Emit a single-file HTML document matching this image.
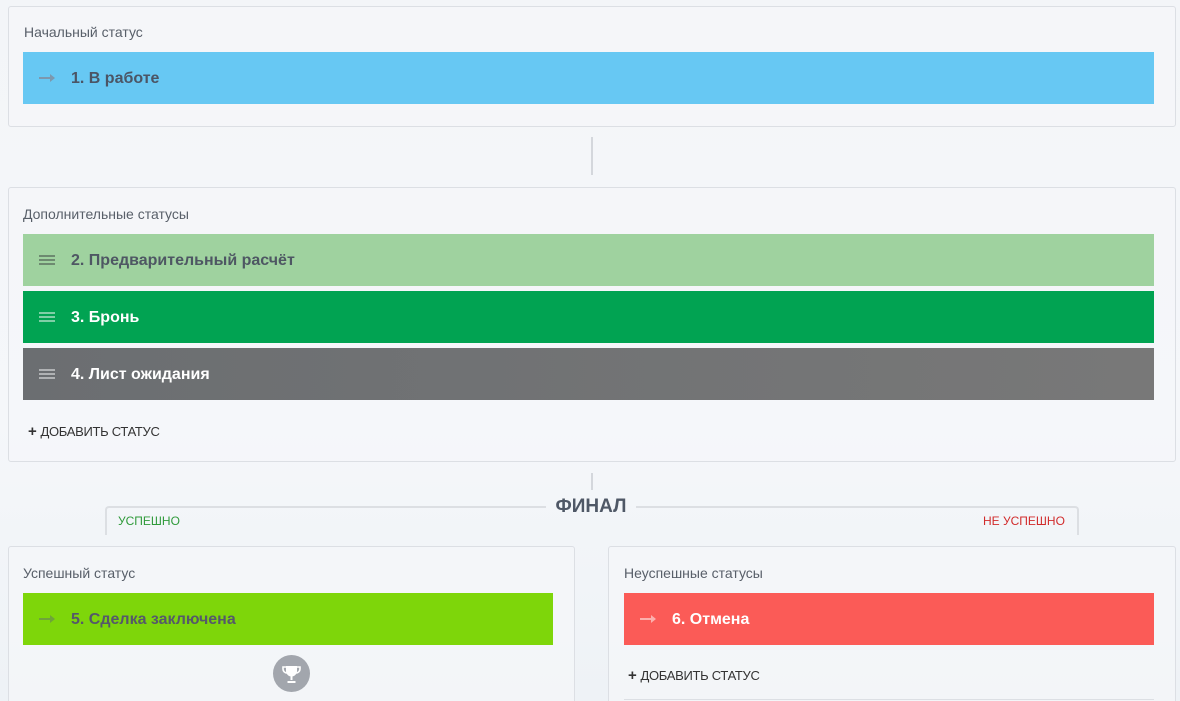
<!DOCTYPE html>
<html><head><meta charset="utf-8"><style>
*{box-sizing:border-box;margin:0;padding:0}
html,body{width:1180px;height:701px;overflow:hidden}
body{background:linear-gradient(#f3f5f8 0%,#f5f7fa 60%,#eef2f6 100%);font-family:"Liberation Sans",sans-serif;position:relative}
.p{position:absolute;border:1px solid #dcdfe4;border-radius:3px;background:rgba(245,247,250,.7)}
.lbl{position:absolute;font-size:14px;color:#585f69}
.bar{position:absolute;height:52px;font-weight:bold;font-size:16px;line-height:54px;padding-left:48px}
.arr{position:absolute;left:16px;top:25px;width:15px;height:2px;background:currentColor}
.arr:after{content:"";position:absolute;right:-1px;top:-3px;border-left:5px solid currentColor;border-top:4px solid transparent;border-bottom:4px solid transparent}
.ham{position:absolute;left:16px;top:21px;width:16px;height:10px;border-top:2px solid;border-bottom:2px solid}
.ham:after{content:"";position:absolute;left:0;right:0;top:2px;border-top:2px solid}
.add{position:absolute;font-size:13px;color:#333;letter-spacing:-.3px}
.add b{font-size:15px;margin-right:4px}
.vl{position:absolute;width:2px;background:#d4d7dc}
</style></head><body>
<div class="p" style="left:8px;top:6px;width:1168px;height:121px"></div>
<div class="lbl" style="left:24px;top:24px">Начальный статус</div>
<div class="bar" style="left:23px;top:52px;width:1131px;background:#67c8f3;color:#4b5565"><span class="arr" style="color:#7c98ae"></span>1. В работе</div>
<div class="vl" style="left:591px;top:137px;height:38px"></div>
<div class="p" style="left:8px;top:187px;width:1168px;height:275px"></div>
<div class="lbl" style="left:23px;top:206px">Дополнительные статусы</div>
<div class="bar" style="left:23px;top:234px;width:1131px;background:#9fd29f;color:#4e5763"><span class="ham" style="color:#6d8a70"></span>2. Предварительный расчёт</div>
<div class="bar" style="left:23px;top:291px;width:1131px;background:#01a352;color:#fff"><span class="ham" style="color:#7fcfa6"></span>3. Бронь</div>
<div class="bar" style="left:23px;top:348px;width:1131px;background:linear-gradient(90deg,#6b6e71,#787878);color:#fff"><span class="ham" style="color:#b0b2b4"></span>4. Лист ожидания</div>
<div class="add" style="left:28px;top:423px"><b>+</b>ДОБАВИТЬ СТАТУС</div>
<div class="vl" style="left:591px;top:473px;height:17px"></div>
<div style="position:absolute;left:105px;top:506px;width:441px;height:29px;border-top:2px solid #dcdfe3;border-left:2px solid #dcdfe3;border-radius:4px 0 0 0"></div>
<div style="position:absolute;left:636px;top:506px;width:443px;height:29px;border-top:2px solid #dcdfe3;border-right:2px solid #dcdfe3;border-radius:0 4px 0 0"></div>
<div style="position:absolute;left:546px;top:496px;width:90px;text-align:center;font-weight:bold;font-size:19px;color:#4f5866">ФИНАЛ</div>
<div style="position:absolute;left:118px;top:514px;font-size:12px;color:#2f9a3a">УСПЕШНО</div>
<div style="position:absolute;left:983px;top:514px;font-size:12px;color:#d12b2b">НЕ УСПЕШНО</div>
<div class="p" style="left:8px;top:546px;width:567px;height:170px"></div>
<div class="lbl" style="left:23px;top:565px">Успешный статус</div>
<div class="bar" style="left:23px;top:593px;width:530px;background:#7ed60a;color:#55596a"><span class="arr" style="color:#6ea43a"></span>5. Сделка заключена</div>
<div style="position:absolute;left:273px;top:655px;width:37px;height:37px;border-radius:50%;background:#a2a6ad">
<svg width="37" height="37" viewBox="0 0 37 37"><path d="M13 12h-3v2a4 4 0 0 0 4 4 M24 12h3v2a4 4 0 0 1-4 4" fill="none" stroke="#fff" stroke-width="1.6"/><path d="M13 11h11v5a5.5 5.5 0 0 1-11 0z" fill="#fff"/><path d="M17.5 21h2v4h-2z M14.5 26h8v2h-8z" fill="#fff"/></svg></div>
<div class="p" style="left:608px;top:546px;width:568px;height:170px"></div>
<div class="lbl" style="left:624px;top:565px">Неуспешные статусы</div>
<div class="bar" style="left:624px;top:593px;width:530px;background:#fb5b57;color:#fff"><span class="arr" style="color:#fcb0ad"></span>6. Отмена</div>
<div class="add" style="left:628px;top:667px"><b>+</b>ДОБАВИТЬ СТАТУС</div>
<div style="position:absolute;left:624px;top:699px;width:530px;height:1px;background:#dcdfe4"></div>
</body></html>
